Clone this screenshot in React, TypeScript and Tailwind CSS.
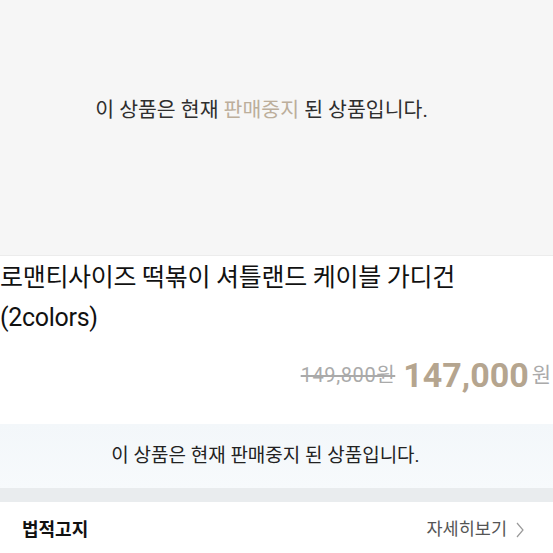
import React from 'react';

const FONT = { fontFamily: 'Roboto, "Noto Sans CJK KR", sans-serif' };

export default function App() {
  return (
    <div className="w-[553px] h-[553px] overflow-hidden bg-white flex flex-col" style={FONT}>
      {/* Image area (sold out) */}
      <div className="h-[256px] shrink-0 bg-[#f6f6f6] border-b border-[#ececec] flex items-center justify-center pb-[34px] pr-[30px]">
        <p className="text-[20.5px] text-[#2e2e2e]">
          이 상품은 현재 <span className="text-[#bcae9b]">판매중지</span> 된 상품입니다.
        </p>
      </div>

      {/* Title */}
      <div className="pt-[2px]">
        <h1 className="text-[25px] leading-[40px] text-[#111] tracking-[-0.3px]">
          로맨티사이즈 떡볶이 셔틀랜드 케이블 가디건
          <br />
          (2colors)
        </h1>
      </div>

      {/* Price */}
      <div className="flex items-end justify-end pr-[2px] mt-[18px] h-[40px]">
        <span className="text-[20px] tracking-[0.6px] text-[#aaa] line-through mr-[8px] mb-[6px]">149,800원</span>
        <span className="text-[34px] font-bold text-[#b5a58f] leading-none mb-[4px]">147,000</span>
        <span className="text-[21px] text-[#aaa] ml-[3px] mb-[5px]">원</span>
      </div>

      {/* Notice */}
      <div className="mt-[28px] h-[64px] bg-gradient-to-b from-[#f3f7fa] to-[#f7fafc] flex items-center justify-center pr-[22px]">
        <p className="text-[19px] text-[#222]">이 상품은 현재 판매중지 된 상품입니다.</p>
      </div>

      {/* Divider */}
      <div className="h-[14px] bg-[#e9ecee]" />

      {/* Legal notice */}
      <div className="flex items-center justify-between pl-[22px] pr-[28px] h-[50px] pt-[5px]">
        <span className="text-[18px] font-bold text-[#111]">법적고지</span>
        <span className="flex items-center text-[17.5px] text-[#555]">
          자세히보기
          <svg width="10" height="18" viewBox="0 0 10 18" className="ml-[8px]">
            <path d="M2 2l6 7-6 7" fill="none" stroke="#999" strokeWidth="1.2" />
          </svg>
        </span>
      </div>
    </div>
  );
}
